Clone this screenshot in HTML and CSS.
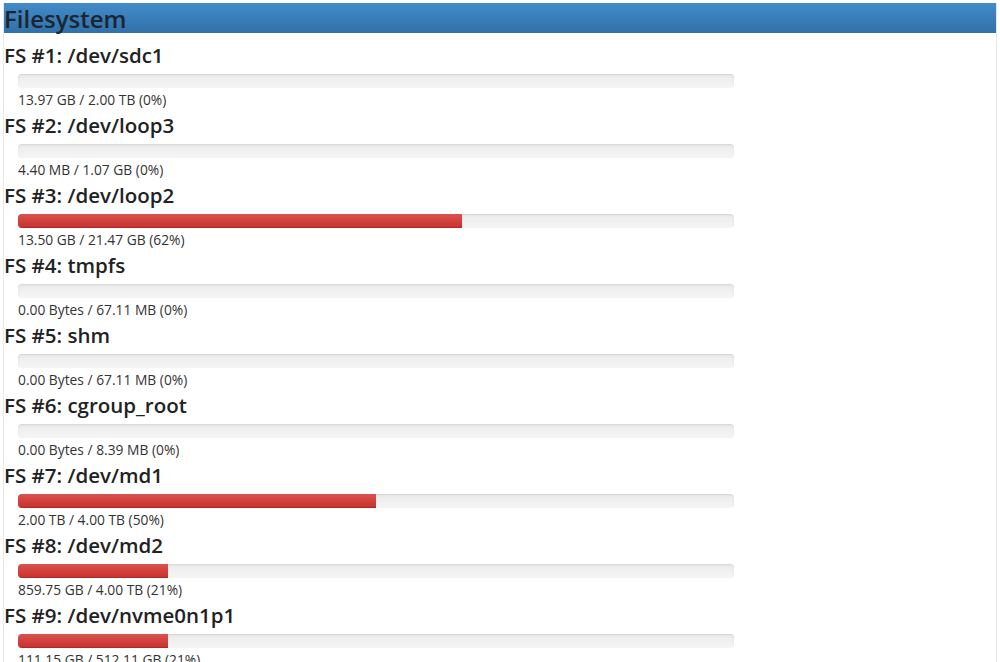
FILE: index.html
```html
<!DOCTYPE html>
<html>
<head>
  <meta charset="UTF-8">
  <title>Filesystem</title>
  <link rel="stylesheet" href="styles.css">
</head>
<body>
  <div class="panel">
    <h1 class="panel-title">Filesystem</h1>
    <div class="fs-list">
      <div class="fs">
        <h3>FS #1: /dev/sdc1</h3>
        <div class="progress"><div class="bar" style="width: 0%"></div></div>
        <div class="usage">13.97 GB / 2.00 TB (0%)</div>
      </div>
      <div class="fs">
        <h3>FS #2: /dev/loop3</h3>
        <div class="progress"><div class="bar" style="width: 0%"></div></div>
        <div class="usage">4.40 MB / 1.07 GB (0%)</div>
      </div>
      <div class="fs">
        <h3>FS #3: /dev/loop2</h3>
        <div class="progress"><div class="bar" style="width: 62%"></div></div>
        <div class="usage">13.50 GB / 21.47 GB (62%)</div>
      </div>
      <div class="fs">
        <h3>FS #4: tmpfs</h3>
        <div class="progress"><div class="bar" style="width: 0%"></div></div>
        <div class="usage">0.00 Bytes / 67.11 MB (0%)</div>
      </div>
      <div class="fs">
        <h3>FS #5: shm</h3>
        <div class="progress"><div class="bar" style="width: 0%"></div></div>
        <div class="usage">0.00 Bytes / 67.11 MB (0%)</div>
      </div>
      <div class="fs">
        <h3>FS #6: cgroup_root</h3>
        <div class="progress"><div class="bar" style="width: 0%"></div></div>
        <div class="usage">0.00 Bytes / 8.39 MB (0%)</div>
      </div>
      <div class="fs">
        <h3>FS #7: /dev/md1</h3>
        <div class="progress"><div class="bar" style="width: 50%"></div></div>
        <div class="usage">2.00 TB / 4.00 TB (50%)</div>
      </div>
      <div class="fs">
        <h3>FS #8: /dev/md2</h3>
        <div class="progress"><div class="bar" style="width: 21%"></div></div>
        <div class="usage">859.75 GB / 4.00 TB (21%)</div>
      </div>
      <div class="fs">
        <h3>FS #9: /dev/nvme0n1p1</h3>
        <div class="progress"><div class="bar" style="width: 21%"></div></div>
        <div class="usage">111.15 GB / 512.11 GB (21%)</div>
      </div>
    </div>
  </div>
</body>
</html>
```

FILE: styles.css
```css
body {
  margin: 3px;
  font-family: "Open Sans", "Noto Sans", sans-serif;
  color: #222;
  background: #fff;
}
.panel {
  border: 1px solid #e4e8ec;
  border-top: none;
}
.panel-title {
  margin: 0;
  height: 30px;
  line-height: 31px;
  font-size: 24px;
  font-weight: 600;
  color: #1c2530;
  background: linear-gradient(to bottom, #428bca 0%, #3071a9 100%);
}
.fs-list {
  padding-top: 5px;
}
.fs {
  padding-top: 5px;
}
.fs h3 {
  margin: 0;
  height: 24px;
  line-height: 24px;
  font-size: 20.5px;
  font-weight: 600;
  color: #222;
  white-space: nowrap;
}
.progress {
  width: 716px;
  height: 14px;
  margin: 7px 0 0 14px;
  overflow: hidden;
  border-radius: 4px;
  background: linear-gradient(to bottom, #ebebeb 0%, #f5f5f5 100%);
  box-shadow: inset 0 1px 2px rgba(0, 0, 0, 0.1);
}
.bar {
  height: 100%;
  background: linear-gradient(to bottom, #d9534f 0%, #c9302c 100%);
  box-shadow: inset 0 -1px 0 rgba(0, 0, 0, 0.15);
}
.usage {
  margin-left: 14px;
  height: 20px;
  line-height: 24px;
  font-size: 13.8px;
  color: #333;
  white-space: nowrap;
}
```
